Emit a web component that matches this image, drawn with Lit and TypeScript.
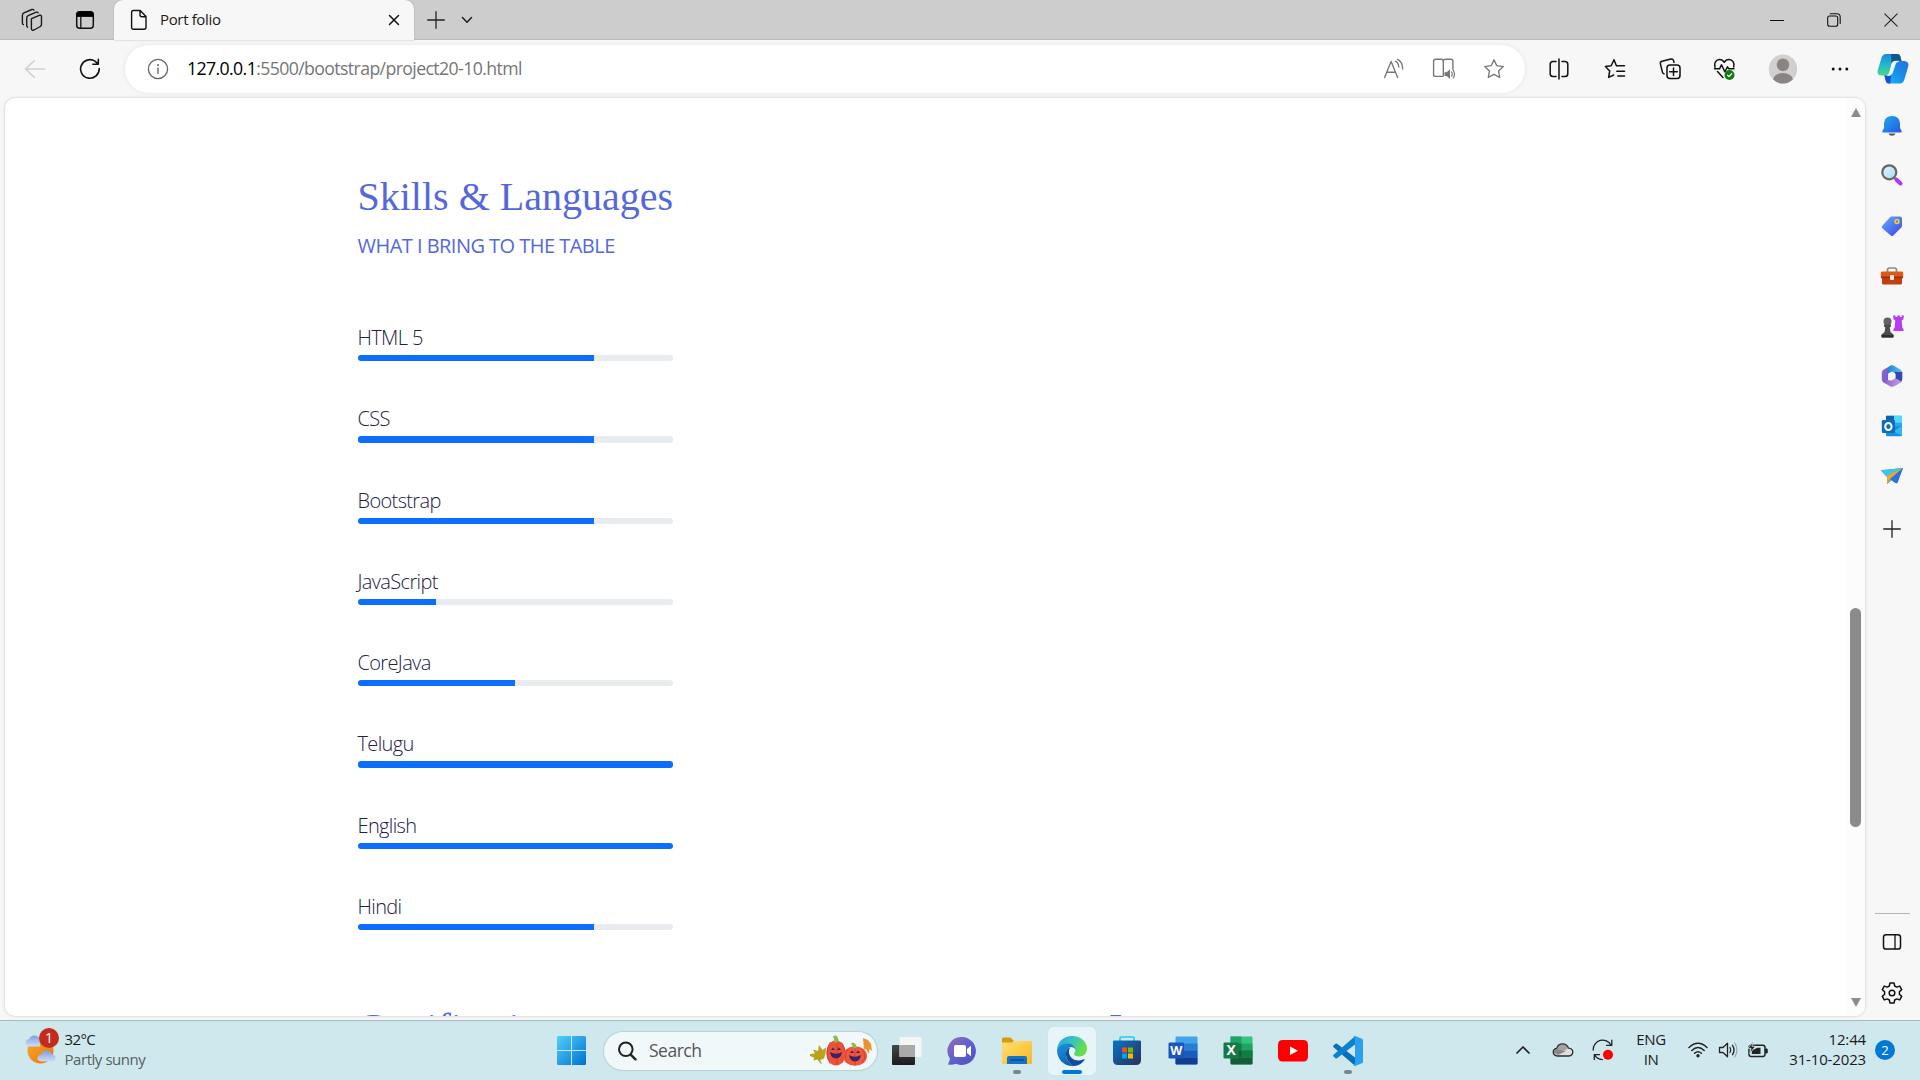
import { LitElement, html, svg, css, TemplateResult } from "lit";
import { customElement } from "lit/decorators.js";

const icon = (w: number, h: number, body: unknown, cls = "") =>
  html`<svg class=${cls} width=${w} height=${h} viewBox="0 0 ${w} ${h}" fill="none" stroke-linecap="round" stroke-linejoin="round">${body}</svg>`;

const STROKE = "#1a1a1a";

/* ---------- browser chrome icons ---------- */
const workspaces = icon(22, 24, svg`<g stroke=${STROKE} stroke-width="1.4">
  <path d="M10.500 10.700 18.300 7.300q2.200-.6 2.200 1.400v7.900q0 1.300-1.200 1.900l-6.300 3.500q-2.300.9-2.600-1v-9q0-1 .1-1.300z"/>
  <path d="M6.600 19.200q-.9-.3-.9-1.600V10q0-1.700 1.500-2.400l8-3.400q1.300-.4 1.900.6"/>
  <path d="M2.400 16.600q-1-.3-1-1.700V7.200q0-1.600 1.500-2.300l8-3.400q1.400-.4 2 .6"/></g>`);
const tabMenu = icon(20, 20, svg`<rect x="1.7" y="1.7" width="16.6" height="16.6" rx="3" stroke="#111" stroke-width="1.5"/>
  <path d="M1.7 6V4.5q0-2.8 2.8-2.8h11q2.8 0 2.8 2.8V6z" fill="#000" stroke="#000"/><path d="M5.8 6v12" stroke="#111" stroke-width="1.3"/>`);
const page = icon(18, 22, svg`<path d="M3.4 1.5h6.8l5.8 6v10.8q0 2-2 2H3.6q-2 0-2-2V3.5q0-2 1.8-2zM10 1.8v4q0 2 2 2h4" stroke="#111" stroke-width="1.4"/>`);
const tabClose = icon(12, 12, svg`<path d="m1.500 1.500 9 9m0-9-9 9" stroke="#111" stroke-width="1.500"/>`);
const plus = icon(18, 18, svg`<path d="M9 .7v16.6M.7 9h16.6" stroke="#222" stroke-width="1.3"/>`);
const chevDown = icon(12, 8, svg`<path d="m1.5 1.5 4.5 4.7 4.5-4.7" stroke="#222" stroke-width="1.6"/>`);
const minimise = icon(14, 14, svg`<path d="M.5 7.5h13" stroke="#111" stroke-width="1.2"/>`);
const restore = icon(14, 14, svg`<rect x=".7" y="3" width="10" height="10.2" rx="2" stroke="#111" stroke-width="1.1"/><path d="M3.3.8h6.5q3.4 0 3.4 3.4v6.3" stroke="#111" stroke-width="1.1"/>`);
const winClose = icon(14, 14, svg`<path d="m.8.8 12.4 12.4m0-12.4L.8 13.2" stroke="#222" stroke-width="1.1"/>`);
const back = icon(22, 20, svg`<path d="M20.5 10H1.5m9-8.5L1.5 10l9 8.5" stroke="#cfcfcf" stroke-width="1.5"/>`);
const reload = icon(22, 22, svg`<path d="M20.2 10.6A9.3 9.3 0 1 1 16 3.2l3 2.6M19.3 1.4v4.8h-5.4" stroke="#111" stroke-width="1.6"/>`);
const info = icon(22, 22, svg`<circle cx="11" cy="11" r="9.6" stroke="#666" stroke-width="1.3"/><path d="M11 10v5.5" stroke="#666" stroke-width="1.4"/><circle cx="11" cy="6.9" r="1" fill="#666"/>`);
const readAloud = icon(22, 22, svg`<g stroke="#777" stroke-width="1.35"><path d="m1.6 19.5 6.5-16 6.5 16M3.9 14.2h8.3"/><path d="M12.3 3.2q3.4 1.6 3.4 5.8M14.5 1.4q5 2.4 5.2 9.6"/></g>`);
const reader = icon(24, 24, svg`<g stroke="#777" stroke-width="1.4"><path d="M11.3 3.2v15.2M11.3 3.6q-.5-1.4-2-1.4H3.6q-2 0-2 2v13.2q0 2 2 2h7.2"/><path d="M11.3 3.6q.5-1.4 2-1.4h5.6q2 0 2 2v8"/></g>
  <path d="M12.5 15.3h2.2l3.3-3v9.6l-3.3-3h-2.2z" fill="#777"/><path d="M19.6 14.9q1.3 2.1 0 4.2M21.3 13.2q2.5 3.9 0 7.6" stroke="#777" stroke-width="1.2"/>`);
const star = icon(22, 22, svg`<path d="m11 1.8 2.8 5.9 6.5.9-4.7 4.5 1.1 6.4L11 16.400l-5.700 3.100 1.100-6.400L1.700 8.600l6.500-.9z" stroke="#777" stroke-width="1.35"/>`);
const split = icon(20, 22, svg`<g stroke="#111" stroke-width="1.5"><path d="M10 1v20"/><path d="M7 3.500H4Q1.200 3.500 1.200 6.300v9.400q0 2.800 2.800 2.800h3M13 3.500h3q2.800 0 2.800 2.800v9.400q0 2.800-2.800 2.800h-3"/></g>`);
const favs = icon(22, 22, svg`<g stroke="#111" stroke-width="1.5"><path d="M13 7.700h-.6L10 1.800 7.200 7.700l-5.800.8 4.300 4.500-1.100 6.400L9.600 17"/><path d="M13.500 7.700h7M12.800 13.200h7.700M13.800 18h6.700"/></g>`);
const collections = icon(22, 24, svg`<g stroke="#111" stroke-width="1.500"><rect x="8" y="8" width="13" height="13.600" rx="3"/><path d="M14.500 11v7.600M10.700 14.800h7.600"/><path d="M15 5.400l-.4-1.800q-.6-2-2.700-1.600L3 4.200Q1 4.800 1.400 6.900l2 8.200q.4 1.300 1.600 1.800"/></g>`);
const health = icon(24, 24, svg`<g stroke="#111" stroke-width="1.500"><path d="M2 10.200C.6 6 3 2.500 6.500 2.500q3 0 4.700 2.800Q13 2.500 16 2.500c3.600 0 6 3.600 4.700 7.500"/><path d="M1.500 11.800h5l2-4 3.300 7 2.700-5 1.300 2h5.200M4.500 14.500l5.500 6"/></g>
  <circle cx="16.500" cy="18" r="5" fill="#107c10"/><path d="m14.500 18.200 1.500 1.400 2.700-3" stroke="#fff" stroke-width="1.200"/>`);
const avatar = icon(30, 32, svg`<defs><clipPath id="av"><ellipse cx="15" cy="16" rx="14.200" ry="14.600"/></clipPath></defs>
  <ellipse cx="15" cy="16" rx="14.200" ry="14.600" fill="#d2d0ce"/><g clip-path="url(#av)" fill="#8a8583"><circle cx="15" cy="11.800" r="6.300"/><ellipse cx="15" cy="27" rx="10" ry="7"/></g>`);
const more = icon(18, 6, svg`<g fill="#111"><circle cx="2.200" cy="3" r="1.500"/><circle cx="9" cy="3" r="1.500"/><circle cx="15.800" cy="3" r="1.500"/></g>`);
const copilot = icon(32, 32, svg`<defs>
  <linearGradient id="c1" x1="0" y1="0" x2="0" y2="1"><stop stop-color="#1b87e0"/><stop offset=".5" stop-color="#25b8c8"/><stop offset="1" stop-color="#4bd88a"/></linearGradient>
  <linearGradient id="c2" x1="1" y1="0" x2="0" y2="1"><stop stop-color="#2a6fe0"/><stop offset=".5" stop-color="#1590ea"/><stop offset="1" stop-color="#13bdf5"/></linearGradient></defs>
  <path d="M9 1h11.500q2 0 2.700 2L24.500 8H18.500q-3 0-3.800 2.800l-2.500 8.800q-1 3-4 3H4.500Q-.5 22.600.8 17L4.600 4.500Q5.700 1 9 1z" fill="url(#c1)"/>
  <path d="M14 1h6.500q2 0 2.700 2L24.500 8H18q-2.500 0-3.500 2z" fill="#0b5a8f"/>
  <path d="M23 30.500H12q-2.500 0-3.200-2.500L7.400 22.600h2.800q2.300 0 3.300-2.500l3.300-9.500Q17.700 8 20.500 8h7Q32.600 8.500 31 14.200l-3.700 12.600q-1.100 3.700-4.300 3.700z" fill="url(#c2)"/>
  <path d="M7.400 22.600h3q2-.2 3.200-2.800l1.200-3.400L13.300 30.500H12q-2.500 0-3.200-2.500z" fill="#1b4fd8"/>
  <path d="M15.500 10Q16.300 8.400 18.500 8.300h3q-2.500.3-3.300 2.700l-3 9q-1 2.400-3 2.400H10.500q2-.5 2.700-3z" fill="#f3f7f8" stroke="#f3f7f8" stroke-width="1"/>`);

/* ---------- sidebar icons ---------- */
const bell = icon(22, 24, svg`<defs><linearGradient id="b1" x1="0" y1="0" x2="1" y2="1"><stop stop-color="#23a9e6"/><stop offset="1" stop-color="#2357e8"/></linearGradient></defs>
  <path d="M3 14V9.500Q3.300 2 11 2t8 7.500V14l1.700 3.300q.3 1.200-1 1.200H2.300q-1.300 0-1-1.200z" fill="url(#b1)"/><path d="M7.500 19.400h7q-.7 2.400-3.500 2.400t-3.500-2.400z" fill="#555"/>`);
const search = icon(24, 24, svg`<defs><linearGradient id="s1" x1="0" y1="0" x2="1" y2="1"><stop stop-color="#e2f5ff"/><stop offset="1" stop-color="#a7dbf8"/></linearGradient></defs>
  <g transform="translate(0 -1)"><path d="m14.500 15 2 2" stroke="#666" stroke-width="2"/><circle cx="9.300" cy="9.300" r="7" fill="url(#s1)" stroke="#666" stroke-width="2.200"/><path d="m16.500 16.700 4 3.800" stroke="#b235ef" stroke-width="4"/></g>`);
const tag = icon(22, 22, svg`<defs><linearGradient id="t1" x1="0" y1="0" x2="1" y2="1"><stop stop-color="#62aefb"/><stop offset="1" stop-color="#3c42ea"/></linearGradient></defs>
  <path d="M10.500 1.500h8.500q2 0 2 2V11q0 .8-.7 1.500l-8 8q-1.300 1.200-2.600 0L1.300 13.300q-1.200-1.300 0-2.600L9 2.200q.6-.7 1.500-.7z" fill="url(#t1)"/><circle cx="16" cy="6.500" r="2" fill="#6a83ea" stroke="#f7ce1b" stroke-width="1.500"/>`);
const toolbox = icon(24, 20, svg`<path d="M7.500 6V4q0-2 2-2h5q2 0 2 2v2" stroke="#8a8a8a" stroke-width="1.700"/><path d="M2 11h20v6q0 1.500-1.500 1.500h-17Q2 18.500 2 17z" fill="#c23f0e"/>
  <path d="M.8 7Q.8 5.500 2.300 5.500h19.400q1.500 0 1.500 1.500v4q0 1-1 1H1.800q-1 0-1-1z" fill="#e0571c"/><path d="M1 10.500h22v1.700H1z" fill="#9b300b"/><rect x="10" y="9" width="4" height="5" rx="1" fill="#e7e7e7"/>`);
const games = icon(24, 24, svg`<path d="M13 1.500h2.500V3h1.800V1.500h2.600V3h1.700V1.500H24l-.7 4-1.600 1 .6 7 1.200 1.500v2H13.500v-2l1.200-1.500.6-7-1.600-1z" fill="#b63df0"/>
  <circle cx="7.500" cy="7.500" r="4" fill="#636363"/><path d="M4 10.500h7v2l-1.300 1 .8 4.500 3 2.500v2q0 1-1 1h-10q-1 0-1-1v-2l3-2.500.8-4.500-1.300-1z" fill="#4d4d4d"/><path d="M1.500 21h12v2.500h-12z" fill="#303030"/>`);
const m365 = icon(22, 24, svg`<defs><linearGradient id="m1" x1="0" y1="0" x2="1" y2="1"><stop stop-color="#a06ad8"/><stop offset="1" stop-color="#5a54c8"/></linearGradient>
  <linearGradient id="m2" x1="0" y1="0" x2="1" y2="0"><stop stop-color="#2b7fd4"/><stop offset="1" stop-color="#52c6f2"/></linearGradient>
  <linearGradient id="m3" x1="0" y1="0" x2="1" y2="0"><stop stop-color="#8a5fd0"/><stop offset="1" stop-color="#c79be6"/></linearGradient></defs>
  <path d="M11 1 2.300 5.800Q.8 6.700.8 8.500v7q0 1.800 1.500 2.700L7 20.500V9z" fill="url(#m1)"/>
  <path d="M9.500 1.600q1.500-.9 3 0l7.200 4.200q1.500.9 1.500 2.700v5L11 7.500 6.500 10V4z" fill="url(#m2)"/>
  <path d="M21.200 8v7.500q0 1.800-1.500 2.700L14 21.500V8z" fill="#3448b5"/>
  <path d="m2.300 18.200 7.200 4.200q1.500.9 3 0l7.200-4.200.8-.8-6.500-3.400-3.500 2.500-4.500-.5z" fill="url(#m3)"/>
  <path d="m11 7.800 3.600 2.100v4.200L11 16.200l-3.600-2.100V9.900z" fill="#f7f7f7"/>`);
const outlook = icon(22, 22, svg`<rect x="5" y=".8" width="16" height="19" rx="1" fill="#28a8ea"/><path d="M5 .8h8v7H5z" fill="#0a64ad"/><path d="M13 .8h8v7h-8z" fill="#50d9ff"/><path d="M5 12.500 21 11v9q0 1.200-1.200 1.200H6.200Q5 21.200 5 20z" fill="#1490df"/><path d="m12 16.500 9-5.500v9.500z" fill="#35b8f1"/>
  <rect x=".8" y="5" width="13.200" height="13" rx="1.200" fill="#0f6cbd"/><ellipse cx="7.400" cy="11.500" rx="3.200" ry="3.600" stroke="#fff" stroke-width="2"/>`);
const plane = icon(24, 20, svg`<path d="M.8 4.200 23 2l-5.500 14.500q-.6 1.200-1.800.5L11 14.200 7 18.300V11z" fill="#2d8fe8"/><path d="M.8 4.200 23 2 6.500 10.500z" fill="#36c5f4"/><path d="M23 2 7 9.500v8.800l3.200-5z" fill="#f2a61c"/><path d="M23 2 10 13l5.700 4q1.200.7 1.800-.5z" fill="#2873e0"/>`);
const panel = icon(20, 18, svg`<rect x="1.500" y="1.700" width="17" height="14.300" rx="2.600" stroke="#111" stroke-width="1.500"/><path d="M13 2v13.800" stroke="#111" stroke-width="1.300"/>`);
const gear = icon(24, 24, svg`<path d="M10 2h4l.7 3 2 1.100 3-1 2 3.500-2.300 2.100v2.600l2.300 2.100-2 3.500-3-1-2 1.100-.7 3h-4l-.7-3-2-1.100-3 1-2-3.500 2.300-2.100v-2.600L2.300 8.600l2-3.500 3 1 2-1.100z" stroke="#111" stroke-width="1.500"/><circle cx="12" cy="12" r="2.800" stroke="#111" stroke-width="1.500"/>`);

/* ---------- taskbar icons ---------- */
const weather = icon(32, 42, svg`<defs><linearGradient id="w1" x1="0" y1="0" x2="1" y2="1"><stop stop-color="#f0b02c"/><stop offset="1" stop-color="#f0700c"/></linearGradient>
  <linearGradient id="w2" x1="0" y1="0" x2="0" y2="1"><stop stop-color="#7d9fdd"/><stop offset="1" stop-color="#cfddf6"/></linearGradient></defs>
  <circle cx="15.500" cy="21.500" r="13" fill="url(#w1)"/><path d="M4 17.500Q0 17 .5 13.500q.5-3 3.500-3.200Q5.500 6.500 9 6.500q4.500 0 6 4v7z" fill="url(#w2)"/>
  <path d="M16.500 32.500q-4-.5-4-3.500t3.500-3.500Q17.500 21.500 21.500 21.500t5.500 4q3.500.5 3.500 3.500t-3.500 3.500z" fill="url(#w2)"/>`);
const start = icon(29, 29, svg`<defs><linearGradient id="st" x1="0" y1="0" x2="1" y2="1"><stop stop-color="#4fd1fb"/><stop offset="1" stop-color="#0070d1"/></linearGradient>
  <clipPath id="stc"><path d="M0 0h14v14H0zM15 0h14v14H15zM0 15h14v14H0zM15 15h14v14H15z"/></clipPath></defs><rect width="29" height="29" rx="1.500" fill="url(#st)" clip-path="url(#stc)"/>`);
const magnify = icon(20, 20, svg`<circle cx="8.800" cy="8.300" r="6.800" stroke="#222" stroke-width="2"/><path d="m13.700 13.700 4.800 4.600" stroke="#222" stroke-width="2.400"/>`);
const face = (x: number, y: number) => svg`<g fill="#3b2466"><path d="M${x - 5} ${y - 2}l2-2.500 2 2.500zM${x + 1} ${y - 2}l2-2.500 2 2.500z"/><path d="M${x - 6} ${y}q6 3.500 12 0-1 6.500-6 6.500t-6-6.500z"/></g>`;
const pumpkins = icon(64, 32, svg`<path d="m1 19 5-.5-2-4 5 1.500 1-6 3.500 5 3.500-2.500-.5 6-1.500 5-4 1.500 2 4-1.500-.5-3-4-4 1 .5-3-4-1.500z" fill="#b9a21c"/>
  <path d="M54 3l5 2 3 4 1 7-2.500-2-.5 5-3-5-2 .5z" fill="#ee932b"/><path d="M26 8q0-4-2-6.500l2.500-1q3 1 3 7.500z" fill="#8cbd48"/><path d="M44 13q0-3-2-4.500l2-1q3 1 3 5.500z" fill="#8cbd48"/>
  <ellipse cx="27" cy="18" rx="9.700" ry="12.500" fill="#ed5235"/><path d="M21 7.500q-6 10 0 21M28 6.500v23M33 8q6 10 0 20" stroke="#cc3a38" stroke-width=".8"/>${face(27, 17)}
  <ellipse cx="46" cy="21" rx="12" ry="9.800" fill="#f25739"/><path d="M39 14q-6 7 0 14M46 12v18M53 14q6 7 0 14" stroke="#cd3d38" stroke-width=".8"/>${face(46, 20)}
  <path d="M26 8q0-4-2-6.500l2.500-1q3 1 3 6.500zM44.500 13.500q0-3-2-4.500l2-1q3 1 3 5z" fill="#8cbd48"/>`);
const taskView = icon(32, 30, svg`<defs><linearGradient id="tv" x1="0" y1="0" x2="0" y2="1"><stop stop-color="#454545"/><stop offset="1" stop-color="#1c1c1c"/></linearGradient></defs>
  <rect x="1" y="9" width="23" height="20" rx="1" fill="url(#tv)"/><rect x="8.500" y="1" width="22" height="20" rx="1" fill="#f5f5f5"/><path d="M8.500 9H24v12H8.500z" fill="#aaa"/>`);
const chat = icon(30, 30, svg`<defs><linearGradient id="ch" x1="0" y1="0" x2="1" y2="1"><stop stop-color="#9a6cb2"/><stop offset=".5" stop-color="#6060cd"/><stop offset="1" stop-color="#4c50c8"/></linearGradient></defs>
  <path d="M15 1a14 14 0 1 1-6 26.700Q5 29.500 1 28.500l2-5.500A14 14 0 0 1 15 1z" fill="url(#ch)"/><rect x="7" y="9" width="12" height="12" rx="1.800" fill="#fff"/><path d="m20 13 4-3.200v10.400L20 17z" fill="#fff"/>`);
const explorer = icon(32, 30, svg`<defs><linearGradient id="ex" x1="0" y1="0" x2="1" y2="1"><stop stop-color="#ffdf78"/><stop offset="1" stop-color="#f9b91c"/></linearGradient></defs>
  <path d="M1 3q0-1.500 1.500-1.500h7L13 5h-1v6H1z" fill="#d99a0a"/><path d="M1 6.500h10L14 5h16q1 0 1 1v21q0 1-1 1H2q-1 0-1-1z" fill="url(#ex)"/>
  <path d="M6 28v-6q0-2 2-2h16q2 0 2 2v6z" fill="#1473c9"/><path d="M9.500 24h13" stroke="#0a4c96" stroke-width="1.400"/>`);
const edge = icon(32, 32, svg`<defs><linearGradient id="e1" x1="0" y1="0" x2="1" y2=".4"><stop stop-color="#2aa4e0"/><stop offset=".5" stop-color="#31c3c8"/><stop offset="1" stop-color="#68e048"/></linearGradient>
  <linearGradient id="e2" x1="0" y1="0" x2=".5" y2="1"><stop stop-color="#1b94de"/><stop offset="1" stop-color="#0c63b8"/></linearGradient></defs>
  <path d="M1 15C1.500 6.500 8 1 16 1c9 0 15 6 15 12.500 0 5-3.500 8-7.500 8-3.500 0-5.500-1-5.500-2.500 0-1 1.500-1.500 1.500-4 0-3-3.500-5.500-8-5.500C6 9.500 2 12.500 1 15z" fill="url(#e1)"/>
  <path d="M1 15c1-3.500 5-6.500 10-6.500 5.500 0 8.500 3.500 8.500 6.500-.5-2-2.500-3-4.500-3-3 0-5 3.500-5 7 0 6 4.500 11.500 9 12-9.500 1.300-18-5.500-18-16z" fill="url(#e2)"/>
  <path d="M14.500 12.200C11 13 9.500 16.500 10 20c.8 6 5 10.500 9 11 4-.6 7.500-3 9.500-6 .4-.7-.2-1-.8-.7C19.500 28 12 22.500 13 15.500q.3-1.800 1.500-3.300z" fill="#104f97"/>`);
const store = icon(32, 32, svg`<defs><linearGradient id="sr" x1="0" y1="0" x2="1" y2="1"><stop stop-color="#0873c4"/><stop offset="1" stop-color="#29315d"/></linearGradient></defs>
  <path d="M9 7V3.500Q9 2 10.500 2h11Q23 2 23 3.500V7" stroke="#30c4f4" stroke-width="1.700"/><path d="M2 6.500q0-1 1-1h26q1 0 1 1v18.500q0 5-5 5H7q-5 0-5-5z" fill="url(#sr)"/>
  <path d="M11 12.500h5v5h-5z" fill="#f25022"/><path d="M17 12.500h5v5h-5z" fill="#7fba00"/><path d="M11 18.500h5v5h-5z" fill="#00a4ef"/><path d="M17 18.500h5v5h-5z" fill="#ffb900"/>`);
const office = (l: string, c: string[], cols = false) => icon(30, 29, svg`<rect x="7.500" y=".5" width="22" height="28" rx="1.200" fill=${c[0]}/><path d="M7.500 7.500h22v7h-22z" fill=${c[1]}/><path d="M7.500 14.500h22v7h-22z" fill=${c[2]}/><path d="M7.500 21.500h22v5.800q0 1.200-1.200 1.200H8.700q-1.200 0-1.200-1.200z" fill=${c[3]}/>
  ${cols ? svg`<path d="M7.500.5h11v7h-11z" fill="#21a366"/><path d="M7.500 7.500h11v7h-11z" fill="#107c41"/><path d="M18.500 14.500h11v7h-11z" fill="#107c41"/><path d="M7.500 14.500h11v7h-11z" fill="#185c37"/>` : ""}
  <rect x=".5" y="6.500" width="15.500" height="16" rx="1.300" fill=${c[4]}/><text x="8.200" y="18.700" text-anchor="middle" class="letter ${l}" fill="#fff">${l}</text>`);
const word = office("W", ["#41a5ee", "#2b7cd3", "#185abd", "#103f91", "#1c55b8"]);
const excel = office("X", ["#33c481", "#21a366", "#107c41", "#185c37", "#147a45"], true);
const youtube = icon(30, 22, svg`<rect width="30" height="21.500" rx="4.500" fill="#f00"/><path d="m12 6.500 8 4.300-8 4.300z" fill="#fff"/>`);
const vscode = icon(32, 32, svg`<path d="m1.500 10.500 2-1.800q.7-.5 1.500 0L23 22.500v8.300L1.500 12.300q-1-.8 0-1.800z" fill="#0a6fb8"/><path d="m1.500 21.500 2 1.800q.7.500 1.500 0L23 9.500V1.200L1.500 19.700q-1 .8 0 1.800z" fill="#0d83cf"/><path d="M23 1l7 2.800q1 .5 1 1.500v21.400q0 1-1 1.500L23 31q-1 .2-1.500-.4L23 28V4l-1.500-2.600Q22 .8 23 1z" fill="#29a1ef"/>`);

const chevUp = icon(14, 10, svg`<path d="m1 8 6-6 6 6" stroke="#222" stroke-width="1.700"/>`);
const cloud = icon(22, 16, svg`<path d="M5.500 14Q1.200 13.500 1.200 10q0-3 3.500-3.600Q6 1.800 10.500 1.800q4.500 0 6 4.300 4.300.4 4.300 4 0 3.600-4 3.900z" fill="#dedede"/><path d="M2 11Q1.500 7 6 7l8 2-8 4z" fill="#888"/><path d="M5 6.500Q6 2.400 10.500 2.400q4 0 5.500 4L11 9z" fill="#a2a2a2"/><path d="M5.500 14Q1.200 13.500 1.200 10q0-3 3.500-3.600Q6 1.800 10.500 1.800q4.500 0 6 4.300 4.300.4 4.300 4 0 3.600-4 3.900z" stroke="#2c2c2c" stroke-width="1.300"/>`);
const sync = icon(22, 22, svg`<path d="M1.200 11A9.500 9.500 0 0 1 19 6M19.800 1.200V6.300H14.600M7.500 15.600H2.300v5M2.800 16q2 4 7.500 4.700" stroke="#222" stroke-width="1.300"/><circle cx="16" cy="15.800" r="5" fill="#f00"/>`);
const wifi = icon(20, 16, svg`<g stroke="#222" stroke-width="1.500"><path d="M1 5.500q9-8.500 18 0"/><path d="M3.800 8.500q6.200-6 12.400 0"/><path d="M6.600 11.300q3.400-3.200 6.800 0"/></g><circle cx="10" cy="13.700" r="1.700" fill="#222"/>`);
const volume = icon(20, 18, svg`<path d="M1.500 6.500H5l4.500-4.300v13.600L5 11.500H1.500z" stroke="#222" stroke-width="1.300"/><path d="M12 6.500q1.500 2.500 0 5M14.500 4.300q3 4.700 0 9.400" stroke="#222" stroke-width="1.300"/><path d="M16.800 2q4.200 7 0 14" stroke="#9aa8ad" stroke-width="1.200"/>`);
const battery = icon(22, 18, svg`<rect x="2" y="4.200" width="16" height="11.300" rx="2.300" stroke="#222" stroke-width="1.500"/><path d="M18.800 8h1.400v4h-1.400z" fill="#222" stroke="#222"/><path d="M4.800 13V9.500l5.500-2.800h3.200V13z" fill="#222"/><path d="M6 .4 1 7.300h3L2.800 12.500l5.700-7.300H5.300z" fill="#222" stroke="#cfe8ee" stroke-width=".8"/>`);

const SKILLS: [string, number][] = [
  ["HTML 5", 75], ["CSS", 75], ["Bootstrap", 75], ["JavaScript", 25],
  ["CoreJava", 50], ["Telugu", 100], ["English", 100], ["Hindi", 75],
];

const SIDEBAR: TemplateResult[] = [bell, search, tag, toolbox, games, m365, outlook, plane];

@customElement("portfolio-page")
class PortfolioPage extends LitElement {
  static styles = css`
    :host { display: block; flex: 1; min-width: 0; height: 918px; overflow: hidden; box-sizing: border-box; padding: 74.5px 0 0 352.5px; font-family: "Open Sans", "Noto Sans", sans-serif; color: #212145; }
    h1, h2 { margin: 0; font: 400 40px/48px "Liberation Serif", serif; color: #5468dc; white-space: nowrap; }
    .sub { margin: 10.5px 0 0; font-size: 20px; line-height: 30px; color: #5468dc; letter-spacing: -0.53px; white-space: nowrap; }
    .skills { display: flex; flex-direction: column; gap: 42px; width: 315px; padding-top: 61px; }
    .name { height: 33px; font-size: 20px; line-height: 31px; font-weight: 300; letter-spacing: -0.64px; }
    .bar { height: 6.25px; border-radius: 3px; background: #e9ecef; overflow: hidden; }
    .fill { height: 100%; background: #0d6efd; }
    .next { display: grid; grid-template-columns: 751.5px 1fr; padding-top: 74px; }
  `;
  render() {
    return html`
      <h1>Skills &amp; Languages</h1>
      <p class="sub">WHAT I BRING TO THE TABLE</p>
      <div class="skills">
        ${SKILLS.map(([name, value]) => html`<div><div class="name">${name}</div><div class="bar"><div class="fill" style="width:${value}%"></div></div></div>`)}
      </div>
      <div class="next"><h2>Certifications</h2><h2>Interests</h2></div>`;
  }
}

@customElement("app-root")
class AppRoot extends LitElement {
  static styles = css`
    :host { display: flex; flex-direction: column; width: 1920px; height: 1080px; overflow: hidden; background: #f7f7f7; font-family: "Open Sans", "Noto Sans", sans-serif; color: #1b1b1b; }
    svg { display: block; flex: none; }
    .c { display: flex; align-items: center; justify-content: center; flex: none; }
    .letter { font: 700 14px "Open Sans", sans-serif; }
    .letter.W { font-size: 12.5px; }

    .tabs { display: flex; height: 40px; flex: none; background: #cdcdcd; box-shadow: inset 0 -2px 1px -1px #b9b9b9; }
    .tabs .w1 { width: 64px; } .tabs .w2 { width: 42px; padding-right: 8px; }
    .tab { display: flex; align-items: center; width: 300px; box-sizing: border-box; padding: 0 14px 0 15.5px; background: #f7f7f7; border-radius: 9px 9px 0 0; font-size: 15px; letter-spacing: -0.35px; box-shadow: 0 0 2px #aaa; }
    .tab .title { flex: 1; padding: 0 0 2px 12.5px; white-space: nowrap; }
    .tabs .add { width: 43px; } .tabs .list { width: 20px; }
    .tabs .add, .tabs .list { padding-bottom: 1px; }
    .grow { flex: 1; }
    .win { width: 57.3px; padding-bottom: 1px; }

    .tools { display: flex; align-items: center; height: 58px; flex: none; }
    .tools .back { width: 70px; } .tools .reload { width: 40px; }
    .address { display: flex; align-items: center; width: 1400px; height: 48px; margin-left: 15px; border-radius: 24px; background: #fff; box-shadow: 0 0 4px #e4e4e4; }
    .address .info { width: 62px; padding-left: 3px; box-sizing: border-box; }
    .url { flex: 1; font-size: 17.7px; color: #767676; letter-spacing: -0.61px; white-space: nowrap; padding-bottom: 2px; }
    .url b { font-weight: 400; color: #000; }
    .address .act { width: 50px; }
    .address .last { width: 56px; padding-right: 7px; box-sizing: border-box; }
    .tool { width: 55.2px; }
    .tools .first { width: 68.5px; }
    .tools .second { width: 42px; }
    .tools .av { width: 60px; } .tools .dots { width: 53px; } .tools .cop { width: 54px; }

    .main { display: flex; height: 922px; flex: none; }
    .view { display: flex; width: 1860px; height: 918px; margin-left: 5px; background: #fff; border-radius: 10px; box-shadow: 0 0 3px #c4c4c4; overflow: hidden; flex: none; }
    .scroll { display: flex; flex-direction: column; align-items: center; width: 19px; background: #fcfcfc; padding: 10px 0 9px; box-sizing: border-box; }
    .before { flex: 0 0 491px; } .thumb { width: 11px; height: 219px; border-radius: 6px; background: #8b8b8b; flex: none; } .after { flex: 1; }
    .up, .down { width: 0; border: 5.5px solid transparent; border-top-width: 0; border-bottom: 9px solid #8b8b8b; }
    .down { transform: rotate(180deg); }
    .side { display: flex; flex-direction: column; align-items: center; width: 52px; margin-left: 1px; }
    .side .cell { height: 50px; width: 52px; }
    .side .top { padding-top: 3px; }
    .side .more { height: 56px; }
    .rule { width: 35px; height: 1px; background: #b5b5b5; }
    .side .pan { height: 55px; } .side .gear { height: 47px; margin-bottom: 4px; }

    .task { display: flex; align-items: center; height: 60px; flex: none; box-sizing: border-box; background: #cfe8ee; border-top: 1px solid #a9b8bc; }
    .weather { display: flex; width: 556.5px; box-sizing: border-box; padding: 0 0 1px 25px; align-items: center; }
    .wicon { position: relative; }
    .count { position: absolute; left: 14px; top: -1px; width: 20px; height: 20px; border-radius: 50%; background: #c42b1c; color: #fff; font-size: 14px; line-height: 19px; text-align: center; }
    .wtext { padding: 0 0 2px 7.5px; font-size: 15px; line-height: 20px; letter-spacing: -0.45px; white-space: nowrap; color: #555f62; }
    .wtext div:first-child { color: #1b1b1b; letter-spacing: -0.6px; }
    .find { display: flex; align-items: center; width: 273px; height: 38px; box-sizing: border-box; margin: 0 3px 0 18px; padding: 0 4px 0 13px; border-radius: 19px; background: #f0f8fa; box-shadow: 0 0 1px 1px #b9d0d6; }
    .find span { flex: 1; padding: 0 0 1px 12.5px; font-size: 17.5px; letter-spacing: -0.5px; color: #555; }
    .app { position: relative; width: 55.1px; height: 59px; }
    .tile { width: 48px; height: 48px; border-radius: 5px; background: #e7f4f8; box-shadow: 0 0 1px #b9cfd4; }
    .dot { position: absolute; bottom: 6px; width: 8px; height: 4px; border-radius: 2px; background: #7d8689; }
    .dot.on { width: 20px; background: #0078d4; }
    .tray { width: 40px; padding-bottom: 1px; } .lang { width: 60px; text-align: center; } .small { width: 30px; padding-bottom: 1px; }
    .lang, .clock { font-size: 15px; line-height: 20px; letter-spacing: -0.4px; white-space: nowrap; padding-bottom: 3px; }
    .clock { width: 93px; text-align: right; letter-spacing: -0.15px; }
    .lang { box-sizing: border-box; padding-right: 4px; }
    .badge { width: 20px; height: 20px; border-radius: 50%; background: #0078d4; color: #fff; font-size: 13px; margin: 0 25px 1px 9px; }
  `;

  render() {
    const c = (cls: string, body: unknown) => html`<div class="c ${cls}">${body}</div>`;
    return html`
      <header class="tabs">
        ${c("w1", workspaces)}${c("w2", tabMenu)}
        <div class="tab">${page}<span class="title">Port folio</span>${tabClose}</div>
        ${c("add", plus)}${c("list", chevDown)}
        <div class="grow"></div>
        ${c("win", minimise)}${c("win", restore)}${c("win", winClose)}
      </header>
      <nav class="tools">
        ${c("back", back)}${c("reload", reload)}
        <div class="address">
          ${c("info", info)}<span class="url"><b>127.0.0.1</b>:5500/bootstrap/project20-10.html</span>
          ${c("act", readAloud)}${c("act", reader)}${c("last", star)}
        </div>
        ${c("first", split)}${c("second", favs)}<div class="grow"></div>${c("tool", collections)}${c("tool", health)}
        ${c("av", avatar)}${c("dots", more)}${c("cop", copilot)}
      </nav>
      <main class="main">
        <div class="view">
          <portfolio-page></portfolio-page>
          <div class="scroll"><div class="up"></div><div class="before"></div><div class="thumb"></div><div class="after"></div><div class="down"></div></div>
        </div>
        <aside class="side">
          <div class="top">${SIDEBAR.map((i) => c("cell", i))}</div>
          ${c("more", plus)}
          <div class="grow"></div>
          <div class="rule"></div>
          ${c("pan", panel)}${c("gear", gear)}
        </aside>
      </main>
      <footer class="task">
        <div class="weather"><div class="wicon">${weather}<div class="count">1</div></div><div class="wtext"><div>32°C</div><div>Partly sunny</div></div></div>
        ${start}
        <div class="find">${magnify}<span>Search</span>${pumpkins}</div>
        ${c("app", taskView)}${c("app", chat)}
        ${c("app", html`${explorer}<i class="dot"></i>`)}
        ${c("app", html`<div class="c tile">${edge}</div><i class="dot on"></i>`)}
        ${c("app", store)}${c("app", word)}${c("app", excel)}${c("app", youtube)}
        ${c("app", html`${vscode}<i class="dot"></i>`)}
        <div class="grow"></div>
        ${c("tray", chevUp)}${c("tray", cloud)}${c("tray", sync)}
        <div class="lang">ENG<br>IN</div>
        ${c("small", wifi)}${c("small", volume)}${c("small", battery)}
        <div class="clock">12:44<br>31-10-2023</div>
        ${c("badge", "2")}
      </footer>`;
  }
}
